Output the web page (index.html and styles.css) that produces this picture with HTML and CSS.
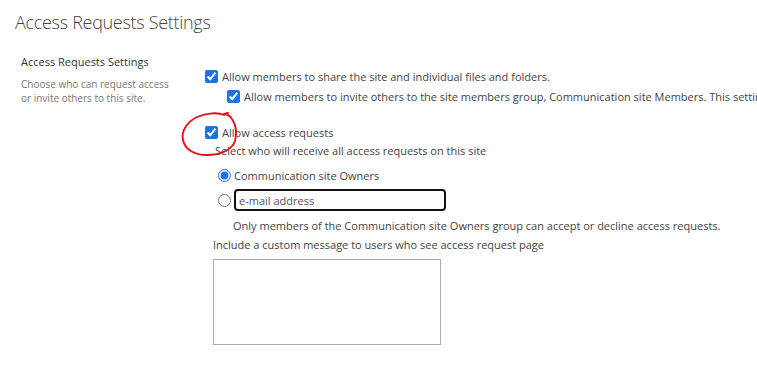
FILE: index.html
```html
<!DOCTYPE html>
<html lang="en">
<head>
    <meta charset="UTF-8">
    <meta name="viewport" content="width=device-width, initial-scale=1.0">
    <title>Access Requests Settings</title>
    <link rel="stylesheet" href="styles.css">
</head>
<body>
    <div class="settings-page">
        <h1 class="page-title">Access Requests Settings</h1>

        <div class="section">
            <div class="section-label">
                <div class="label-title">Access Requests Settings</div>
                <div class="label-desc">Choose who can request access or invite others to this site.</div>
            </div>

            <div class="section-body">
                <label class="check-row">
                    <input type="checkbox" checked>
                    <span>Allow members to share the site and individual files and folders.</span>
                </label>
                <label class="check-row nested">
                    <input type="checkbox" checked>
                    <span>Allow members to invite others to the site members group, Communication site Members. This setting must be enabled to let members share the site.</span>
                </label>

                <label class="check-row access">
                    <input type="checkbox" checked>
                    <span>Allow access requests</span>
                </label>
                <div class="hint">Select who will receive all access requests on this site</div>

                <label class="radio-row">
                    <input type="radio" name="owner" checked>
                    <span>Communication site Owners</span>
                </label>
                <div class="radio-row">
                    <input type="radio" name="owner">
                    <input type="text" class="email-input" placeholder="e-mail address">
                </div>
                <div class="note">Only members of the Communication site Owners group can accept or decline access requests.</div>

                <div class="msg-label">Include a custom message to users who see access request page</div>
                <textarea class="msg-box"></textarea>

                <!-- red pen mark around the access requests checkbox -->
                <svg class="scribble" width="64" height="50" viewBox="0 0 64 50">
                    <path d="M44 5 C38 2 26 3 17 7 C7 12 1 21 3 30 C5 40 15 45 27 45 C40 45 52 40 55 31 C57 23 56 15 52 9 C50 6 47 4 44 4 L48 3"
                          fill="none" stroke="#e8101c" stroke-width="1.9" stroke-linecap="round" stroke-linejoin="round"/>
                </svg>
            </div>
        </div>
    </div>
</body>
</html>
```

FILE: styles.css
```css
body, html {
    margin: 0;
    padding: 0;
    background: #fff;
    overflow: hidden;
}

.settings-page {
    font-family: "Open Sans", "Noto Sans", sans-serif;
    color: #444;
    padding: 10px 0 0 15px;
}

.page-title {
    margin: 0;
    font-size: 18px;
    letter-spacing: -0.3px;
    font-weight: 300;
    color: #444;
    line-height: 24px;
}

.section {
    display: flex;
    margin-top: 20px;
}

.section-label {
    width: 184px;
    padding-left: 6px;
    flex-shrink: 0;
}

.label-title {
    font-size: 11px;
    line-height: 16px;
    color: #333;
}

.label-desc {
    margin-top: 7px;
    font-size: 10px;
    line-height: 14px;
    color: #777;
    width: 152px;
}

.section-body {
    position: relative;
    flex: 1;
    min-width: 0;
    padding-top: 14px;
    font-size: 11px;
}

.check-row {
    display: flex;
    align-items: center;
    gap: 4px;
    white-space: nowrap;
    height: 16px;
}

.check-row input,
.radio-row input[type="radio"] {
    margin: 0;
    width: 13px;
    height: 13px;
    accent-color: #1a73e8;
    flex-shrink: 0;
}

.check-row.nested {
    margin-top: 4px;
    margin-left: 22px;
}

.check-row.access {
    margin-top: 20px;
}

.hint {
    margin-top: 3px;
    margin-left: 10px;
    line-height: 16px;
}

.radio-row {
    display: flex;
    align-items: center;
    gap: 3px;
    margin-left: 13px;
    height: 16px;
    margin-top: 8px;
}

.radio-row + .radio-row {
    height: 22px;
    margin-top: 6px;
}

.email-input {
    width: 202px;
    height: 18px;
    box-sizing: content-box;
    border: 2px solid #111;
    border-radius: 4px;
    padding: 0 3px;
    font-family: inherit;
    font-size: 11px;
    color: #444;
    outline: none;
}

.email-input::placeholder {
    color: #555;
}

.note {
    margin-top: 7px;
    margin-left: 28px;
    line-height: 16px;
}

.msg-label {
    margin-top: 3px;
    margin-left: 8px;
    line-height: 16px;
}

.msg-box {
    display: block;
    margin: 6px 0 0 8px;
    width: 226px;
    height: 84px;
    border: 1px solid #ababab;
    resize: none;
    padding: 0;
}

.scribble {
    position: absolute;
    left: -25px;
    top: 56px;
}
```
